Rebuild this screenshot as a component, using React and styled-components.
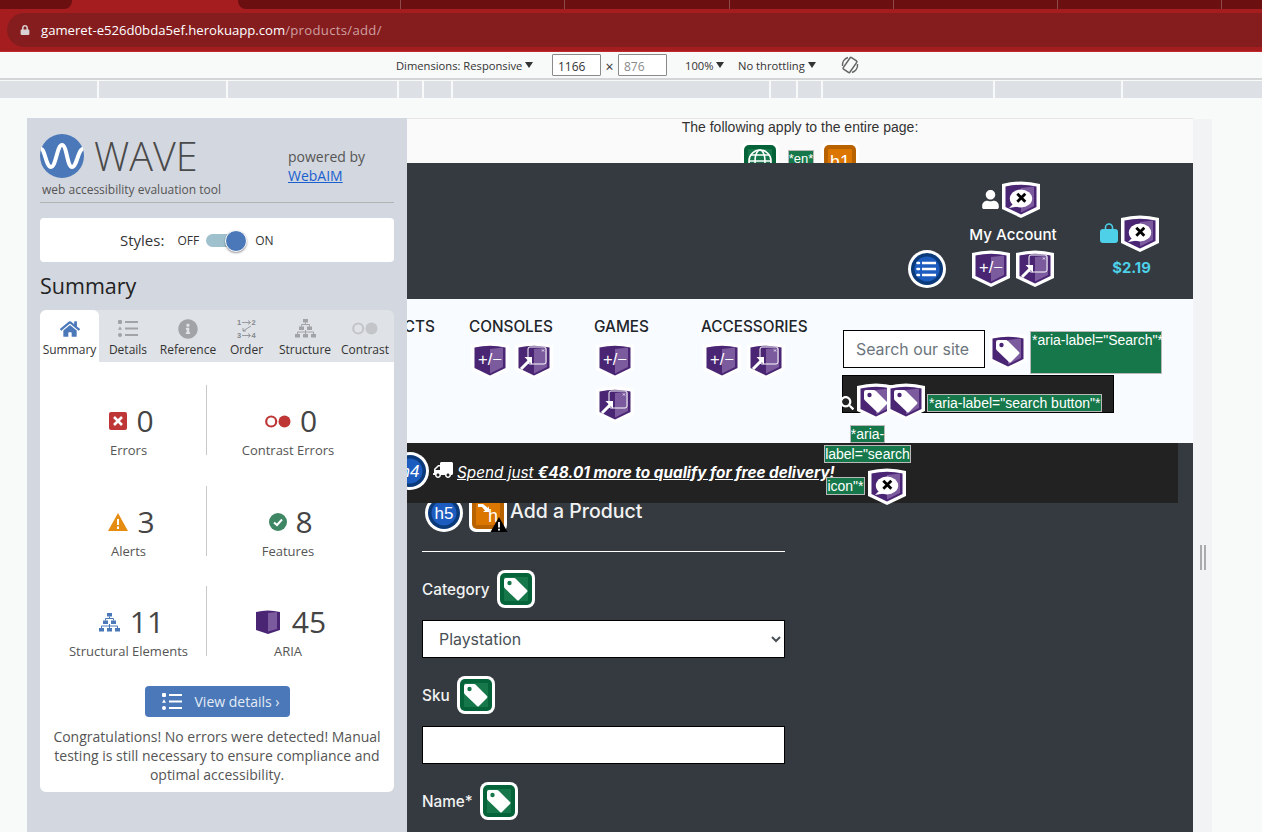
import styled, { createGlobalStyle } from "styled-components";
import { FaHome, FaInfoCircle, FaLock, FaSearch, FaTruck, FaUser } from "react-icons/fa";

const GlobalStyle = createGlobalStyle`
  html, body {
    margin: 0;
    height: 832px;
    overflow: hidden;
    background: #f8f9f9;
    font-family: "Open Sans", sans-serif;
  }
  * {
    box-sizing: border-box;
  }
`;

/* browser chrome */
const TabStrip = styled.div`
  display: flex;
  height: 13px;
  padding-bottom: 4px;
  background: #a61d20;
`;

const Tab = styled.div`
  width: ${(p) => p.$w}px;
  flex: ${(p) => (p.$grow ? 1 : "none")};
  background: ${(p) => (p.$active ? "#a61d20" : "#6b0f10")};
  border-right: ${(p) => (p.$tick ? "1px solid #8e4a4a" : "none")};
  border-radius: ${(p) => p.$radius || "0"};
`;

const AddressRow = styled.div`
  height: 39px;
  padding: 0 0 5px 7px;
  background: #a61d20;
  border-bottom: 1px solid #c02a2c;
`;

const AddressBar = styled.div`
  display: flex;
  align-items: center;
  gap: 11px;
  height: 34px;
  padding-left: 13px;
  background: #851d1f;
  border-radius: 17px 0 0 17px;
  color: #d9d2d2;
  font-size: 13.15px;

  svg {
    font-size: 10px;
  }
  span {
    color: #fff;
  }
  em {
    color: #cf9f9f;
    font-style: normal;
    letter-spacing: 0.3px;
  }
`;

const DevToolbar = styled.div`
  display: flex;
  align-items: center;
  height: 28px;
  padding-left: 396px;
  background: #f8f9f9;
  border-bottom: 2px solid #d3d5d7;
  color: #333;
  font-family: "Open Sans", sans-serif;
  font-size: 11.2px;
`;

const ToolLabel = styled.span`
  width: ${(p) => p.$w}px;
  margin-left: ${(p) => p.$ml || 0}px;
  white-space: nowrap;

  &::after {
    content: "";
    display: inline-block;
    margin-left: 3px;
    border: solid transparent;
    border-width: 6px 4px 0;
    border-top-color: #333;
    vertical-align: 2px;
  }
`;

const SizeBox = styled.div`
  width: 49px;
  height: 22px;
  padding: 3px 0 0 5px;
  background: #fff;
  border: 1px solid #8a8a8a;
  border-radius: 1px;
  font-size: 12px;
  color: ${(p) => (p.$muted ? "#8a8a8a" : "#333")};
`;

const Times = styled.span`
  width: 17px;
  padding-top: 3px;
  font-size: 14px;
  text-align: center;
`;

const RotateIcon = styled.svg`
  width: 20px;
  height: 20px;
  margin-left: 12px;
`;

const Ruler = styled.div`
  display: flex;
  gap: 2px;
  height: 17px;
  margin-top: 1px;
`;

const RulerPart = styled.div`
  flex: ${(p) => (p.$w ? `0 0 ${p.$w}px` : 1)};
  background: #dde0e4;
`;

/* page frame */
const Stage = styled.div`
  display: flex;
  height: 714px;
  margin-top: 20px;
  padding-left: 27px;
`;

const Sidebar = styled.aside`
  position: relative;
  z-index: 3;
  flex: 0 0 380px;
  padding: 16px 13px 0;
  background: #d3d7df;
  color: #444;
`;

const Brand = styled.div`
  display: flex;
  height: 69px;
  border-bottom: 1px solid #b3b5b5;
`;

const BrandLeft = styled.div`
  width: 248px;
`;

const LogoRow = styled.div`
  display: flex;
  align-items: center;
  gap: 10px;
  height: 44px;
`;

const LogoWord = styled.div`
  font-size: 39.5px;
  font-weight: 300;
  line-height: 44px;
  color: #4a4a4a;
`;

const Tagline = styled.div`
  margin: 3px 0 0 2px;
  font-size: 12px;
  line-height: 18px;
  color: #555;
  white-space: nowrap;
`;

const Powered = styled.div`
  padding-top: 13px;
  font-size: 14px;
  line-height: 19px;
  color: #555;

  a {
    display: block;
    color: #1a5fd0;
    text-decoration: underline;
  }
`;

const StylesBox = styled.div`
  display: flex;
  align-items: center;
  height: 44px;
  margin-top: 15px;
  padding-left: 80px;
  background: #fff;
  border-radius: 4px;
  color: #333;
  font-size: 15px;
`;

const SwitchLabel = styled.span`
  margin: ${(p) => p.$margin};
  font-size: 12px;
`;

const Track = styled.div`
  position: relative;
  width: 34px;
  height: 13px;
  background: #9fc1cd;
  border-radius: 7px;
`;

const Knob = styled.div`
  position: absolute;
  top: -4px;
  right: -7px;
  width: 22px;
  height: 22px;
  background: #4a78b8;
  border: 1px solid #fff;
  border-radius: 50%;
  box-shadow: 0 1px 2px rgba(0, 0, 0, 0.4);
`;

const SummaryTitle = styled.h2`
  margin: 9px 0 9px;
  font-size: 21.5px;
  font-weight: 400;
  line-height: 30px;
  color: #222;
`;

const TabRow = styled.div`
  display: grid;
  grid-template-columns: 59px 58px 62px 55px 62px 58px;
  height: 52px;
  background: #dfe2e6;
  border-radius: 6px 6px 0 0;
`;

const ToolTab = styled.div`
  display: flex;
  flex-direction: column;
  align-items: center;
  height: 52px;
  padding-top: 8px;
  background: ${(p) => (p.$active ? "#fff" : "transparent")};
  border-radius: 6px 6px 0 0;
  color: ${(p) => (p.$active ? "#4a78b8" : "#a1a3a6")};
  font-size: 20px;

  span {
    margin-top: 3px;
    font-size: 12px;
    line-height: 16px;
    color: #333;
    white-space: nowrap;
  }
`;

const TabIcon = styled.div`
  display: flex;
  align-items: center;
  justify-content: center;
  height: 21px;
`;

const Panel = styled.div`
  height: 430px;
  padding-top: 23px;
  background: #fff;
  border-radius: 0 0 6px 6px;
`;

const StatGrid = styled.div`
  display: grid;
  grid-template-columns: 156px 162px;
  row-gap: 30.5px;
  margin-left: 11px;
`;

const Stat = styled.div`
  display: flex;
  flex-direction: column;
  align-items: center;
  height: 70px;
  padding-top: 17px;
  border-right: ${(p) => (p.$divider ? "1px solid #c9c9c9" : "none")};
`;

const StatTop = styled.div`
  display: flex;
  align-items: center;
  justify-content: center;
  gap: ${(p) => p.$gap || 8}px;
  height: 38px;
  padding-left: 6px;
`;

const StatValue = styled.div`
  font-size: 30px;
  line-height: 38px;
  color: #444;
`;

const StatLabel = styled.div`
  margin-top: 1px;
  font-size: 13px;
  line-height: 18px;
  color: #555;
  white-space: nowrap;
`;

const DetailsButton = styled.div`
  display: flex;
  align-items: center;
  gap: 13px;
  width: 145px;
  height: 31px;
  margin: 30px auto 0;
  padding-left: 17px;
  background: #4a78b8;
  border-radius: 4px;
  color: #e4ecf6;
  font-size: 14px;
`;

const Congrats = styled.p`
  margin: 10px 0 0;
  padding: 0 13px;
  font-size: 14px;
  line-height: 19px;
  text-align: center;
  color: #555;
`;

const Main = styled.main`
  position: relative;
  flex: 0 0 786px;
  overflow: hidden;
  background: #343a40;
  font-family: Inter, sans-serif;
`;

const ResizeStrip = styled.div`
  display: flex;
  justify-content: center;
  flex: 0 0 19px;
  margin-top: 1px;
  padding-top: 426px;
  background: #f1f3f5;
`;

const Handle = styled.div`
  width: 6px;
  height: 25px;
  border: solid #a9abad;
  border-width: 0 2px;
`;

/* the page under test */
const Notice = styled.div`
  height: 45px;
  overflow: hidden;
  background: #fafafa;
  border-top: 1px solid #e6e6e6;
  font-family: "Liberation Sans", sans-serif;
  font-size: 14px;
  line-height: 16px;
  text-align: center;
  color: #333;
`;

const NoticeIcons = styled.div`
  display: flex;
  justify-content: center;
  gap: 9px;
  margin: 7px 0 0;
`;

const Label = styled.span`
  display: inline-block;
  padding: 0 1px;
  background: #16784a;
  border: 1px solid #b9b9b9;
  font-family: "Liberation Sans", sans-serif;
  font-size: 14px;
  line-height: 16px;
  color: #fff;
  white-space: nowrap;
`;

const EnLabel = styled(Label)`
  height: 24px;
  margin: 8px -2px 0 0;
  padding: 0;
  font-size: 13px;
`;

const SiteHeader = styled.header`
  display: flex;
  justify-content: flex-end;
  height: 136px;
  padding-right: 34px;
  background: #343a40;
  color: #fff;
`;

const MenuSlot = styled.div`
  padding-top: 87px;
  margin-right: 26px;
`;

const Account = styled.div`
  display: flex;
  flex-direction: column;
  align-items: center;
  width: 82px;
  margin-right: 46px;
  padding-top: 17px;
`;

const IconLine = styled.div`
  display: flex;
  align-items: center;
  justify-content: center;
  gap: ${(p) => p.$gap || 0}px;
  margin-left: ${(p) => p.$ml || 0}px;
`;

const AccountName = styled.div`
  margin: 7px 0 5px;
  font-size: 15.2px;
  font-weight: 500;
  line-height: 19px;
  white-space: nowrap;
`;

const Cart = styled.div`
  display: flex;
  flex-direction: column;
  align-items: center;
  width: 59px;
  padding-top: 51px;
`;

const CartTotal = styled.div`
  margin: 6px 0 0 4px;
  font-size: 14.8px;
  font-weight: 700;
  line-height: 20px;
  color: #4dd0e8;
`;

const Nav = styled.nav`
  position: relative;
  z-index: 2;
  display: flex;
  justify-content: flex-end;
  height: 144px;
  padding-right: 31px;
  background: #f8fbff;
`;

const NavItem = styled.div`
  display: flex;
  flex-direction: column;
  align-items: flex-start;
  flex: none;
  width: ${(p) => p.$w}px;
  margin-right: ${(p) => p.$mr || 0}px;
  padding-top: 18px;
  font-size: 15.3px;
  font-weight: 500;
  line-height: 19px;
  color: #212529;
  white-space: nowrap;
`;

const NavIcons = styled.div`
  display: flex;
  flex-wrap: wrap;
  gap: 6px;
  margin-top: 5px;
  padding-left: 2px;
`;

const SearchCol = styled.div`
  flex: 0 0 320px;
  padding-top: 31px;
`;

const SearchRow = styled.div`
  display: flex;
  align-items: flex-start;

  & > svg {
    margin-top: 2px;
  }
`;

const SearchInput = styled.input`
  width: 142px;
  height: 38px;
  margin: 0 4px 0 1px;
  padding: 0 12px;
  background: #fff;
  border: 1px solid #000;
  font: 15.9px Inter, sans-serif;

  &::placeholder {
    color: #6c757d;
  }
`;

const SearchLabel = styled(Label)`
  width: 132px;
  height: 43px;
  margin: 1px 0 0 3px;
`;

const SearchButton = styled.div`
  display: flex;
  align-items: flex-start;
  width: 272px;
  height: 38px;
  margin-top: 1px;
  padding-top: 6px;
  background: #222;
  border: 1px solid #000;
  color: #fff;
  font-size: 15px;

  & > svg:first-child {
    flex: none;
    margin: 14px 3px 0 -3px;
  }
  & > svg + svg + svg {
    margin-left: -8px;
  }
`;

const ButtonLabel = styled(Label)`
  margin: 12px 0 0 2px;
`;

const SearchCaption = styled.div`
  position: relative;
  z-index: 3;
  display: flex;
  flex-direction: column;
  align-items: center;
  width: 85px;
  margin: 12px 0 0 -17px;
`;

const CaptionLine = styled.div`
  display: flex;
  align-items: center;
  gap: 3px;
  margin-top: ${(p) => p.$mt || 0}px;
  padding-right: ${(p) => p.$pr || 0}px;
`;

const CaptionLabel = styled(Label)`
  padding: 0;
`;

const FreeDelivery = styled.div`
  position: relative;
  z-index: 1;
  display: flex;
  align-items: center;
  gap: 4px;
  width: 771px;
  height: 60px;
  background: #222;
  color: #fff;
  font-size: 15.3px;
  font-style: italic;
`;

const DeliveryIcon = styled.div`
  flex: none;
  margin-left: -16px;
`;

const DeliveryText = styled.span`
  margin-bottom: 5px;
  text-decoration: underline;
  white-space: nowrap;

  svg {
    margin-right: 4px;
    transform: scaleX(-1);
    vertical-align: -2px;
  }
  b {
    font-weight: 700;
  }
`;

const Content = styled.section`
  width: 378px;
  padding-left: 15px;
  color: #f2f2f2;
`;

const Heading = styled.div`
  display: flex;
  align-items: center;
  gap: 6px;
  height: 48px;
  margin-top: -17px;
  padding: 6px 0 0 3px;
  font-size: 19.5px;
  font-weight: 500;
`;

const HeadingTitle = styled.span`
  margin: -4px 0 0 -3px;
`;

const Rule = styled.hr`
  height: 1px;
  margin: 17px 0 0;
  background: #fff;
  border: 0;
`;

const Field = styled.div`
  padding-top: 18px;
`;

const FieldLabel = styled.label`
  display: flex;
  align-items: center;
  gap: 7px;
  font-size: 15.3px;
  font-weight: 500;
`;

const Select = styled.select`
  display: block;
  width: 100%;
  height: 38px;
  margin-top: 12px;
  padding: 0 12px;
  background: #fff;
  border: 1px solid #000;
  border-radius: 0;
  color: #495057;
  font: 15.9px Inter, sans-serif;
`;

const TextInput = styled.input`
  display: block;
  width: 100%;
  height: 38px;
  margin-top: 12px;
  background: #fff;
  border: 1px solid #000;
`;

/* wave icons */
function Shield({ glyph }) {
  return (
    <svg width="38" height="38" viewBox="0 0 38 38" style={{ flex: "none" }}>
      <path d="M0 4Q19-1 38 4V29L19 38 0 29Z" fill="#fff" />
      <path d="M3.5 6.5Q19 3 34.5 6.5V27L19 34.5 3.5 27Z" fill="#4a2574" />
      <path d="M19 8L32 6.5V26L19 32.5Z" fill="#7b5a9e" />
      {glyph === "bubble" && (
        <>
          <ellipse cx="19" cy="18.5" rx="11.2" ry="9" fill="#fff" />
          <path d="M11 24L7 28 16 26.5Z" fill="#fff" />
          <path d="M15.3 13.7L23.3 21.7M23.3 13.7L15.3 21.7" stroke="#000" strokeWidth="2.8" />
        </>
      )}
      {glyph === "plus" && (
        <text x="19" y="24" textAnchor="middle" fontFamily="Liberation Sans" fontSize="16.5" fill="#fff">
          +/−
        </text>
      )}
      {glyph === "ref" && (
        <>
          <rect x="13" y="6" width="18" height="17" rx="2" fill="none" stroke="#fff" strokeWidth="1" />
          <path d="M27 8.5L29 10.5M29 8.5L27 10.5" stroke="#fff" strokeWidth="0.8" />
          <path d="M6 28L15 19" stroke="#fff" strokeWidth="3" />
          <path d="M9.5 16H17V23.5Z" fill="#fff" />
        </>
      )}
      {glyph === "tag" && <TagShape hole="#4a2574" />}
    </svg>
  );
}

function TagShape({ hole }) {
  return (
    <>
      <path d="M7 10Q7 8 9 8H17Q18 8 19 9L30 20Q31 21 30 22L22 30Q21 31 20 30L8 18.5Q7 17.5 7 16.5Z" fill="#fff" />
      <circle cx="12.5" cy="13" r="2.2" fill={hole} />
    </>
  );
}

function Circle({ children }) {
  return (
    <svg width="38" height="38" viewBox="0 0 38 38" style={{ flex: "none" }}>
      <circle cx="19" cy="19" r="19" fill="#fff" />
      <circle cx="19" cy="19" r="16" fill="#0b3a7a" />
      <circle cx="19" cy="19" r="12.5" fill="#1d5cbf" />
      {children}
    </svg>
  );
}

function HeadingText({ children }) {
  return (
    <text x="19" y="25" textAnchor="middle" fontFamily="Liberation Sans" fontSize="17" fill="#fff">
      {children}
    </text>
  );
}

function MenuCircle() {
  return (
    <Circle>
      <path d="M14 13H28M14 19H28M14 25H28" stroke="#fff" strokeWidth="2.6" />
      <path d="M9.5 13H11M9.5 19H11M9.5 25H11" stroke="#fff" strokeWidth="2.6" strokeLinecap="round" />
    </Circle>
  );
}

function GreenTile({ children }) {
  return (
    <svg width="38" height="38" viewBox="0 0 38 38" style={{ flex: "none" }}>
      <rect width="38" height="38" rx="8" fill="#fff" />
      <rect x="3" y="3" width="32" height="32" rx="5" fill="#05633a" />
      <rect x="7" y="7" width="24" height="24" fill="#16784a" />
      {children}
    </svg>
  );
}

function OrangeTile({ warn, children }) {
  return (
    <svg width="38" height="38" viewBox="0 0 38 38" style={{ flex: "none", overflow: "visible" }}>
      <rect width="38" height="38" rx="7" fill="#fff" />
      <rect x="3" y="3" width="32" height="32" rx="5" fill="#b86200" />
      <rect x="7" y="7" width="24" height="24" fill="#db7600" />
      {children}
      {warn && (
        <>
          <path d="M30 23L38.5 38H21.5Z" fill="#000" />
          <path d="M30 28V33.5M30 34.8V36.6" stroke="#fff" strokeWidth="1.8" />
        </>
      )}
    </svg>
  );
}

function WaveLogo() {
  return (
    <svg width="44" height="44" viewBox="0 0 44 44">
      <circle cx="22" cy="22" r="22" fill="#4a78b8" />
      <path d="M1 15C5 15 6 33 11 33S17 11 22 11 27 33 32 33 38 15 43 15" fill="none" stroke="#fff" strokeWidth="4" />
    </svg>
  );
}

function ListIcon({ color }) {
  return (
    <svg width="20" height="17" viewBox="0 0 20 17">
      <path d="M7 2H20M7 8.5H20M7 15H20" stroke={color} strokeWidth="2" />
      <rect x="0" y="0" width="4" height="4" rx="1" fill={color} />
      <path d="M2 6.3L4 9.8H0Z" fill={color} />
      <circle cx="2" cy="15" r="2" fill={color} />
    </svg>
  );
}

function OrderIcon() {
  return (
    <svg width="20" height="21" viewBox="0 0 20 21" fontFamily="Liberation Sans" fontSize="7.5" fontWeight="700" fill="#85888c">
      <text x="0" y="7">1</text>
      <text x="14.5" y="7">2</text>
      <text x="0" y="20">3</text>
      <text x="14.5" y="20">4</text>
      <path d="M5 4.5H13M11 2.5L13.5 4.5 11 6.5M5 17.5H13M11 15.5L13.5 17.5 11 19.5M14 8L6 13M6 10V13H9" fill="none" stroke="#85888c" strokeWidth="0.8" />
    </svg>
  );
}

function TreeIcon({ color }) {
  return (
    <svg width="21" height="19" viewBox="0 0 21 19" fill={color}>
      <rect x="8" y="0" width="5" height="3.5" />
      <rect x="4" y="7.5" width="5" height="3.5" />
      <rect x="12" y="7.5" width="5" height="3.5" />
      <rect x="0" y="15" width="5" height="3.5" />
      <rect x="8" y="15" width="5" height="3.5" />
      <rect x="16" y="15" width="5" height="3.5" />
      <path d="M10.5 3.5V5.5M6.5 7.5V5.5H14.5V7.5M2.5 15V13H18.5V15M10.5 11V15" fill="none" stroke={color} />
    </svg>
  );
}

function ContrastIcon({ color, bg = "#fff" }) {
  return (
    <svg width="26" height="13" viewBox="0 0 26 13">
      <circle cx="6.2" cy="6.5" r="5" fill={bg} stroke={color} strokeWidth="2.2" />
      <circle cx="19.5" cy="6.5" r="6" fill={color} />
    </svg>
  );
}

function AriaIcon() {
  return (
    <svg width="24" height="24" viewBox="0 0 24 24">
      <path d="M0 2Q12-1 24 2V20L12 24 0 20Z" fill="#4a2574" />
      <path d="M12 3L21 2V19L12 21.5Z" fill="#7b5a9e" />
    </svg>
  );
}

function ErrorIcon() {
  return (
    <svg width="18" height="18" viewBox="0 0 18 18">
      <rect width="18" height="18" rx="2" fill="#bf3636" />
      <path d="M5 5L13 13M13 5L5 13" stroke="#fff" strokeWidth="2.6" />
    </svg>
  );
}

function AlertIcon() {
  return (
    <svg width="20" height="18" viewBox="0 0 20 18">
      <path d="M10 0L20 18H0Z" fill="#e58d13" />
      <path d="M10 6V12M10 13.5V16" stroke="#fff" strokeWidth="2" />
    </svg>
  );
}

function FeatureIcon() {
  return (
    <svg width="18" height="18" viewBox="0 0 18 18">
      <circle cx="9" cy="9" r="9" fill="#3f8764" />
      <path d="M5 9.5L8 12 13 6.5" fill="none" stroke="#fff" strokeWidth="2" />
    </svg>
  );
}

function BagIcon() {
  return (
    <svg width="18" height="20" viewBox="0 0 18 20">
      <path d="M5.5 8V4.5a3.5 3.5 0 0 1 7 0V8" fill="none" stroke="#4dd0e8" strokeWidth="1.6" />
      <rect y="6" width="18" height="14" rx="3" fill="#4dd0e8" />
    </svg>
  );
}

const rulerParts = [97, 127, 169, 23, 27, 316, 25, 23, 170, 126, 0];

const tabs = [
  { name: "Summary", icon: <FaHome />, active: true },
  { name: "Details", icon: <ListIcon color="#a1a3a6" /> },
  { name: "Reference", icon: <FaInfoCircle /> },
  { name: "Order", icon: <OrderIcon /> },
  { name: "Structure", icon: <TreeIcon color="#a1a3a6" /> },
  { name: "Contrast", icon: <ContrastIcon color="#c3c5c8" bg="#dfe2e6" /> },
];

const stats = [
  { label: "Errors", value: 0, icon: <ErrorIcon />, gap: 9 },
  { label: "Contrast Errors", value: 0, icon: <ContrastIcon color="#bf3636" />, gap: 9 },
  { label: "Alerts", value: 3, icon: <AlertIcon />, gap: 9 },
  { label: "Features", value: 8, icon: <FeatureIcon />, gap: 8 },
  { label: "Structural Elements", value: 11, icon: <TreeIcon color="#4a78b8" />, gap: 10 },
  { label: "ARIA", value: 45, icon: <AriaIcon />, gap: 12 },
];

export default function App() {
  return (
    <>
      <GlobalStyle />
      <TabStrip>
        <Tab $w={72} $radius="0 0 8px 0" />
        <Tab $w={166} $active />
        <Tab $w={163} $tick $radius="0 0 0 8px" />
        <Tab $w={164} $tick />
        <Tab $w={165} $tick />
        <Tab $w={164} $tick />
        <Tab $w={164} $tick />
        <Tab $w={164} $tick />
        <Tab $grow />
      </TabStrip>
      <AddressRow>
        <AddressBar>
          <FaLock />
          <div>
            <span>gameret-e526d0bda5ef.herokuapp.com</span>
            <em>/products/add/</em>
          </div>
        </AddressBar>
      </AddressRow>
      <DevToolbar>
        <ToolLabel $w={156}>Dimensions: Responsive</ToolLabel>
        <SizeBox>1166</SizeBox>
        <Times>×</Times>
        <SizeBox $muted>876</SizeBox>
        <ToolLabel $w={53} $ml={18}>100%</ToolLabel>
        <ToolLabel $w={90}>No throttling</ToolLabel>
        <RotateIcon viewBox="0 0 20 20" fill="none" stroke="#666" strokeWidth="1.5">
          <rect x="6" y="3" width="8" height="14" rx="1" transform="rotate(35 10 10)" />
          <path d="M2.5 11A8 8 0 0 1 8 2.5M17.5 9A8 8 0 0 1 12 17.5" />
        </RotateIcon>
      </DevToolbar>
      <Ruler>
        {rulerParts.map((w, i) => (
          <RulerPart key={i} $w={w} />
        ))}
      </Ruler>
      <Stage>
        <Sidebar>
          <Brand>
            <BrandLeft>
              <LogoRow>
                <WaveLogo />
                <LogoWord>WAVE</LogoWord>
              </LogoRow>
              <Tagline>web accessibility evaluation tool</Tagline>
            </BrandLeft>
            <Powered>
              powered by
              <a href="#webaim">WebAIM</a>
            </Powered>
          </Brand>
          <StylesBox>
            Styles:
            <SwitchLabel $margin="0 7px 0 13px">OFF</SwitchLabel>
            <Track>
              <Knob />
            </Track>
            <SwitchLabel $margin="0 0 0 15px">ON</SwitchLabel>
          </StylesBox>
          <SummaryTitle>Summary</SummaryTitle>
          <TabRow>
            {tabs.map((tab) => (
              <ToolTab key={tab.name} $active={tab.active}>
                <TabIcon>{tab.icon}</TabIcon>
                <span>{tab.name}</span>
              </ToolTab>
            ))}
          </TabRow>
          <Panel>
            <StatGrid>
              {stats.map((stat, i) => (
                <Stat key={stat.label} $divider={i % 2 === 0}>
                  <StatTop $gap={stat.gap}>
                    {stat.icon}
                    <StatValue>{stat.value}</StatValue>
                  </StatTop>
                  <StatLabel>{stat.label}</StatLabel>
                </Stat>
              ))}
            </StatGrid>
            <DetailsButton>
              <ListIcon color="#fff" />
              View details ›
            </DetailsButton>
            <Congrats>
              Congratulations! No errors were detected! Manual testing is still necessary to ensure compliance and
              optimal accessibility.
            </Congrats>
          </Panel>
        </Sidebar>
        <Main>
          <Notice>
            The following apply to the entire page:
            <NoticeIcons>
              <GreenTile>
                <g fill="none" stroke="#fff" strokeWidth="1.6">
                  <circle cx="19" cy="19" r="11" />
                  <ellipse cx="19" cy="19" rx="5" ry="11" />
                  <path d="M8 19H30M10 13H28M10 25H28" />
                </g>
              </GreenTile>
              <EnLabel>*en*</EnLabel>
              <OrangeTile>
                <text x="19" y="26" textAnchor="middle" fontFamily="Liberation Sans" fontSize="18" fill="#fff">
                  h1
                </text>
              </OrangeTile>
            </NoticeIcons>
          </Notice>
          <SiteHeader>
            <MenuSlot>
              <MenuCircle />
            </MenuSlot>
            <Account>
              <IconLine $gap={2} $ml={-6}>
                <FaUser size={19} color="#fff" />
                <Shield glyph="bubble" />
              </IconLine>
              <AccountName>My Account</AccountName>
              <IconLine $gap={6}>
                <Shield glyph="plus" />
                <Shield glyph="ref" />
              </IconLine>
            </Account>
            <Cart>
              <IconLine $gap={3}>
                <BagIcon />
                <Shield glyph="bubble" />
              </IconLine>
              <CartTotal>$2.19</CartTotal>
            </Cart>
          </SiteHeader>
          <Nav>
            <NavItem $w={88} $mr={31}>PRODUCTS</NavItem>
            <NavItem $w={84} $mr={41}>
              CONSOLES
              <NavIcons>
                <Shield glyph="plus" />
                <Shield glyph="ref" />
              </NavIcons>
            </NavItem>
            <NavItem $w={54} $mr={53}>
              GAMES
              <NavIcons>
                <Shield glyph="plus" />
                <Shield glyph="ref" />
              </NavIcons>
            </NavItem>
            <NavItem $w={107} $mr={34}>
              ACCESSORIES
              <NavIcons>
                <Shield glyph="plus" />
                <Shield glyph="ref" />
              </NavIcons>
            </NavItem>
            <SearchCol>
              <SearchRow>
                <SearchInput placeholder="Search our site" />
                <Shield glyph="tag" />
                <SearchLabel>*aria-label="Search"*</SearchLabel>
              </SearchRow>
              <SearchButton>
                <FaSearch size={14} />
                <Shield glyph="tag" />
                <Shield glyph="tag" />
                <ButtonLabel>*aria-label="search button"*</ButtonLabel>
              </SearchButton>
              <SearchCaption>
                <CaptionLabel>*aria-</CaptionLabel>
                <CaptionLine $mt={2}>
                  <CaptionLabel>label="search</CaptionLabel>
                </CaptionLine>
                <CaptionLine $mt={4} $pr={3}>
                  <CaptionLabel>icon"*</CaptionLabel>
                  <Shield glyph="bubble" />
                </CaptionLine>
              </SearchCaption>
            </SearchCol>
          </Nav>
          <FreeDelivery>
            <DeliveryIcon>
              <Circle>
                <HeadingText>h4</HeadingText>
              </Circle>
            </DeliveryIcon>
            <DeliveryText>
              <FaTruck size={20} />
              Spend just <b>€48.01 more to qualify for free delivery!</b>
            </DeliveryText>
          </FreeDelivery>
          <Content>
            <Heading>
              <Circle>
                <HeadingText>h5</HeadingText>
              </Circle>
              <OrangeTile warn>
                <path d="M9 10H14L19 14 20 12V18H14L16 16.5 13 13H9Z" fill="#fff" />
                <text x="24" y="28" textAnchor="middle" fontFamily="Liberation Sans" fontSize="18" fill="#fff">
                  h
                </text>
              </OrangeTile>
              <HeadingTitle>Add a Product</HeadingTitle>
            </Heading>
            <Rule />
            <Field>
              <FieldLabel>
                Category
                <GreenTile>
                  <TagShape hole="#16784a" />
                </GreenTile>
              </FieldLabel>
              <Select defaultValue="Playstation">
                <option>Playstation</option>
                <option>Xbox</option>
              </Select>
            </Field>
            <Field>
              <FieldLabel>
                Sku
                <GreenTile>
                  <TagShape hole="#16784a" />
                </GreenTile>
              </FieldLabel>
              <TextInput />
            </Field>
            <Field>
              <FieldLabel>
                Name*
                <GreenTile>
                  <TagShape hole="#16784a" />
                </GreenTile>
              </FieldLabel>
            </Field>
          </Content>
        </Main>
        <ResizeStrip>
          <Handle />
        </ResizeStrip>
      </Stage>
    </>
  );
}
